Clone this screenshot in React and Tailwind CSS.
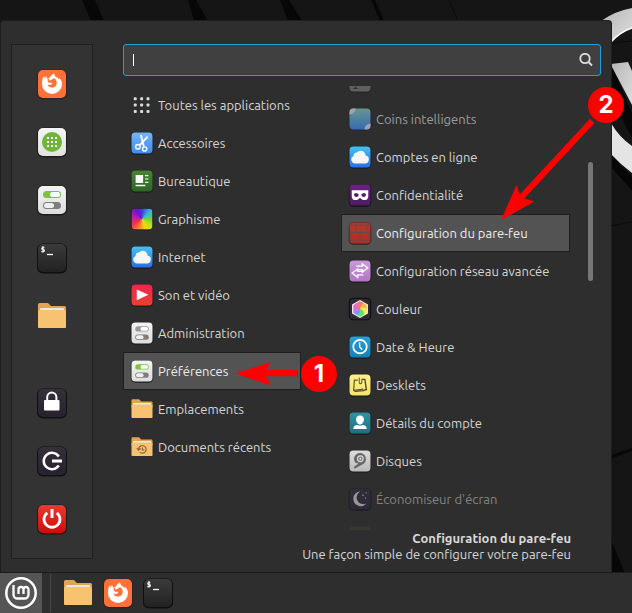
import React from "react";

const SANS = "font-['Ubuntu','Noto_Sans','Open_Sans',sans-serif]";

function Svg({ size = "size-8", children }) {
  return (
    <svg viewBox="0 0 32 32" className={`${size} shrink-0`} aria-hidden="true" fill="none">
      {children}
    </svg>
  );
}

function Tile({ size, id, from, to, edge = "#1d1d1d", children }) {
  return (
    <Svg size={size}>
      <defs>
        <linearGradient id={id} x1="0" y1="0" x2="0" y2="1">
          <stop offset="0" stopColor={from} />
          <stop offset="1" stopColor={to} />
        </linearGradient>
      </defs>
      <rect x="1" y="1.5" width="30" height="30" rx="6" fill={edge} />
      <rect x="2" y="2" width="28" height="28" rx="5" fill={`url(#${id})`} />
      {children}
    </Svg>
  );
}

function Firefox({ id }) {
  return (
    <Tile id={id} from="#ff7139" to="#ff7139" edge="#2a2422">
      <path
        fill="#fff"
        d="M6.600 10.500l1.300-2.600.8 2 1.400-2 .9 2.500h2.300c.6-2.200 2.200-3.200 4.700-5.200.3 1.800 1.100 3 2.300 4.400l.7-.6c.5 1 .9 1.500 1.400 1.900l.9-.9c1.800 1.800 2.700 3.800 2.700 6a10 10 0 0 1-20 0c0-1.900.2-3.700.6-5.500z"
      />
      <path
        fill="#ff7139"
        d="M12 13.800l-.6-2.300c1-.9 2-1.200 3-.9h4.200c1.300.9 2.100 2.500 2.100 4.500a4.700 4.600 0 0 1-9.200 1.200c1.400 1 3.600.9 4.600-.6.300-.6-.3-1.200-1.400-1-1.300.2-2 .1-2.700-.9z"
      />
      <path d="M13.300 12.800l2.900-1.400 1.200-1.800-2.200-.5-2.500 1.400z" fill="#fff" />
    </Tile>
  );
}

function Switches({ id, size, top = "#7cc43f" }) {
  return (
    <Tile id={id} size={size} from="#f4f4f4" to="#dcdcdc">
      <rect x="7" y="7" width="18" height="7" rx="3.500" fill={top} />
      <rect x="14" y="8" width="10" height="5" rx="2.500" fill="#fff" />
      <rect x="7" y="18" width="18" height="7" rx="3.500" fill="#7e7e7e" />
      <rect x="8" y="19" width="10" height="5" rx="2.500" fill="#efefef" />
    </Tile>
  );
}

function Terminal({ id }) {
  return (
    <Tile id={id} from="#3b3b3b" to="#222" edge="#0f0f0f">
      <path
        d="M8.300 5.600H6.800a1 1 0 0 0 0 2h.6a1 1 0 0 1 0 2H5.300M7 4v6.600"
        stroke="#f2f2f2"
        strokeWidth="1.200"
      />
      <path d="M11 12.500h6" stroke="#fff" strokeWidth="1.300" />
    </Tile>
  );
}

function Folder({ size, recent }) {
  return (
    <Svg size={size}>
      <path d="M2 4.500a1.500 1.500 0 0 1 1.500-1.500h8.500l3 3h13.500a1.500 1.500 0 0 1 1.500 1.500V14H2z" fill="#dfa54f" />
      <rect x="4" y="8" width="24" height="4" rx="1" fill="#e9e9ea" />
      <path d="M2 11.500a1.500 1.500 0 0 1 1.500-1.500h25a1.500 1.500 0 0 1 1.500 1.500V27a1 1 0 0 1-1 1H3a1 1 0 0 1-1-1z" fill="#f8c370" />
      {recent && (
        <path
          d="M11.500 19.500a5 5 0 1 1 1.500 3.300M9.200 17.500l2.300 2.700 2.700-2.200M16.500 16.500v3.200h2.500"
          stroke="#8a6838"
          strokeWidth="1.600"
        />
      )}
    </Svg>
  );
}

const S = "size-6";

function Cloud({ id }) {
  return (
    <Tile id={id} size={S} from="#41c4f2" to="#2a6ee8">
      <path fill="#f6f6f6" d="M9.500 24.500a5.200 5.200 0 0 1-2-10 4 4 0 0 1 4.500-4.500 6.500 6.500 0 0 1 11.400 4A5.300 5.300 0 0 1 22.800 24.500z" />
    </Tile>
  );
}

const icons = {
  all: (
    <Svg size={S}>
      {[7, 15.500, 24].map((y) =>
        [7, 15.500, 24].map((x) => (
          <rect key={`${x}-${y}`} x={x - 2} y={y - 1.500} width="4" height="4" rx="1.200" fill="#dcdcdc" />
        ))
      )}
    </Svg>
  ),
  accessories: (
    <Tile id="acc" size={S} from="#76b5fb" to="#3d8bea">
      <g stroke="#fff" strokeWidth="1.900">
        <circle cx="10.500" cy="21" r="3" />
        <circle cx="19.500" cy="24" r="2.800" />
        <path d="M13 18.700L23.500 7.500M18.500 21L14.500 5.500" strokeWidth="2.500" />
      </g>
    </Tile>
  ),
  office: (
    <Tile id="off" size={S} from="#46862f" to="#2f6426">
      <path fill="#fff" d="M7.500 8h10v10.500h-10zM20 8h4.500v1.500H20zM20 12.500h4.500V14H20zM20 17h4.500v1.500H20zM7.500 21h13v2h-13z" />
    </Tile>
  ),
  graphics: (
    <svg viewBox="0 0 32 32" className="size-6 shrink-0" aria-hidden="true">
      <foreignObject x="1" y="1" width="30" height="30">
        <div className="size-[30px] rounded-[6px] border border-[#222] bg-[conic-gradient(from_0deg,#3a3ce0,#36b3d8_45deg,#72d23a_90deg,#b9e01b_125deg,#ffd60a_160deg,#f9822d_200deg,#f0304a_240deg,#c020a0_280deg,#6a10d8_330deg,#3a3ce0)]" />
      </foreignObject>
    </svg>
  ),
  video: (
    <Tile id="vid" size={S} from="#f0264f" to="#e8402e">
      <path fill="#fff" d="M9 8.500v14.500L24.500 15.800z" />
    </Tile>
  ),
  admin: <Switches id="adm" size={S} top="#9a9a9a" />,
  prefs: <Switches id="prf" size={S} />,
  places: <Folder size={S} />,
  recent: <Folder size={S} recent />,
  previous: (
    <Tile id="prv" size={S} from="#bdbdbd" to="#bdbdbd">
      <path d="M7 26h6M12 23.500L8 26" stroke="#444" strokeWidth="1.500" />
    </Tile>
  ),
  corners: (
    <Tile id="cor" size={S} from="#86d0c8" to="#3c8cf8" edge="#2b1d3c">
      <path d="M2 10V7a5 5 0 0 1 5-5h3a8 8 0 0 1-8 8zM30 22v3a5 5 0 0 1-5 5h-3a8 8 0 0 1 8-8z" fill="#e4e1e5" />
    </Tile>
  ),
  privacy: (
    <Tile id="pri" size={S} from="#6c2383" to="#4b1c62" edge="#16101a">
      <path fill="#fff" d="M5 9.500h22v8c0 3-1.500 5-4 5h-3c-2 0-2.500-2.500-4-2.500s-2 2.500-4 2.500H9c-2.500 0-4-2-4-5z" />
      <path fill="#562070" d="M8 14.500q3.500-2.500 6.500 1-.5 3-3.500 3t-3-4zM24 14.500q-3.500-2.500-6.500 1 .5 3 3.500 3t3-4z" />
    </Tile>
  ),
  firewall: (
    <Tile id="fw" size={S} from="#c0342a" to="#b02d24" edge="#2d2321">
      <path
        d="M2 5.300h28M2 15.300h28M2 25.300h28M10.700 5.300v10M25.300 5.300v10M16 15.300v10M4 15.300v10M28 15.300v10M9.500 25.300V30M22.700 25.300V30"
        stroke="#59504a"
        strokeWidth="1.300"
      />
    </Tile>
  ),
  network: (
    <Tile id="net" size={S} from="#cb9ada" to="#b275c5">
      <path
        d="M11 9.500h8V6.300L26.500 12 19 17.500v-3.200h-5M20.500 21.300h-7.500v3.200L5.500 18.700 13 13.200v3.200h6"
        stroke="#fff"
        strokeWidth="1.700"
      />
    </Tile>
  ),
  colour: (
    <svg viewBox="0 0 32 32" className="size-6 shrink-0" aria-hidden="true">
      <rect x="1" y="1" width="30" height="30" rx="6" fill="#111014" />
      <rect x="2.500" y="2.500" width="27" height="27" rx="5" fill="#302a35" />
      <path d="M16 4l10.500 6v12L16 28 5.500 22V10z" fill="#fff" />
      <path d="M16 16C12 13 12 8 16 5.500l5 2.500z" fill="#ff7661" />
      <path d="M16 16c0-4 2-7 5-8l4 3v5.500z" fill="#ffb34d" />
      <path d="M16 16c3-3 7-2.500 9 .5V21l-4 3z" fill="#e9ee54" />
      <path d="M16 16c4 1 6 4.500 5 8l-5 2.500-5-2.500z" fill="#62df71" />
      <path d="M16 16c1 4-1 7-5 8l-4-3v-4.500z" fill="#7c96fa" />
      <path d="M16 16c-3 3-7 3-9 .5V11l4-3 5-2.500z" fill="#e969d0" />
      <path d="M16 16C12 13 11.500 8.500 16 5.500z" fill="#ff7661" />
    </svg>
  ),
  clock: (
    <Tile id="clk" size={S} from="#2aa0d5" to="#1580b8">
      <circle cx="16" cy="15.500" r="9" stroke="#fff" strokeWidth="2.300" />
      <path d="M15.500 9.500v6.200l3.500 4" stroke="#fff" strokeWidth="1.800" />
    </Tile>
  ),
  desklets: (
    <Tile id="dsk" size={S} from="#fff08a" to="#f7e26a">
      <path d="M13 9.500H8.500L7.500 23l13-1.500" stroke="#5d582f" strokeWidth="1.600" />
      <path d="M19 8.500h3.500L24.500 22l-4 1.500-12 1" stroke="#4a4628" strokeWidth="1.800" />
      <path d="M15 6v6.500a1.700 1.700 0 0 0 3.400 0V7.500" stroke="#6d673c" strokeWidth="1.500" />
    </Tile>
  ),
  account: (
    <Tile id="usr" size={S} from="#2f93a3" to="#1f7080">
      <path fill="#fff" d="M16 6c3.600 0 5.300 2.500 5.300 5.300S19.300 18 16 18s-5.300-3.800-5.300-6.700S12.400 6 16 6zM7 24c0-3.500 2.500-5.500 5.500-5.500 2 1.300 5 1.300 7 0 3 0 5.500 2 5.500 5.500z" />
    </Tile>
  ),
  disks: (
    <Tile id="dks" size={S} from="#dcdcdc" to="#b9b9b9">
      <path d="M9.500 18a8 8 0 1 1 11.500 1.500L10 25.500c-2 .8-3-.8-1.500-2.300l5.500-4z" fill="#666" />
      <circle cx="16.500" cy="13" r="3.800" stroke="#dedede" strokeWidth="1.500" fill="#777" />
      <circle cx="16.500" cy="13" r="1.200" fill="#eee" />
    </Tile>
  ),
  saver: (
    <Tile id="sav" size={S} from="#352c48" to="#2e2642" edge="#0a090c">
      <path fill="#fff" d="M16.500 6a9.800 9.800 0 1 0 8 16A8.800 8.800 0 0 1 16.500 6z" />
      <path fill="#ddd" d="M19 10h2v2h-2zM23.500 7h1.500v1.500h-1.500zM22.500 14h1.500v1.500h-1.500z" />
    </Tile>
  ),
  next: <Tile id="nxt" size={S} from="#9cae5b" to="#9cae5b" />,
};

const favourites = [
  ["Firefox", <Firefox id="ff1" />],
  [
    "Logithèque",
    <Tile id="soft" from="#f4f4f4" to="#e2e2e2">
      <circle cx="16" cy="16" r="10" fill="#6fb53a" />
      {[12, 16, 20].map((y) =>
        [12, 16, 20].map((x) => <rect key={`${x}-${y}`} x={x - 1} y={y - 1} width="2" height="2" fill="#fff" />)
      )}
    </Tile>,
  ],
  ["Paramètres système", <Switches id="sys" />],
  ["Terminal", <Terminal id="t1" />],
  ["Fichiers", <Folder />],
];

const session = [
  [
    "Verrouiller l'écran",
    <Tile id="lock" from="#352f3c" to="#28222e" edge="#111014">
      <path d="M11.200 14.500v-4.300a4.600 4.600 0 0 1 9.200 0v4.300" stroke="#fff" strokeWidth="2" />
      <rect x="8" y="13" width="15.500" height="10.500" rx="1" fill="#fff" />
    </Tile>,
  ],
  [
    "Fermer la session",
    <Tile id="out" from="#352f3c" to="#28222e" edge="#111014">
      <path d="M22.800 11.500a8.200 8.200 0 1 0 0 9" stroke="#fff" strokeWidth="2.500" />
      <path d="M16 16h10" stroke="#fff" strokeWidth="3" />
    </Tile>,
  ],
  [
    "Éteindre",
    <Tile id="off2" from="#e83a30" to="#d00b0b">
      <path d="M11.300 9.800a8 8 0 1 0 9.400 0" stroke="#fff" strokeWidth="2.800" />
      <path d="M16 6v9" stroke="#fff" strokeWidth="3" />
    </Tile>,
  ],
];

const categories = [
  ["all", "Toutes les applications"],
  ["accessories", "Accessoires"],
  ["office", "Bureautique"],
  ["graphics", "Graphisme"],
  ["internet", "Internet"],
  ["video", "Son et vidéo"],
  ["admin", "Administration"],
  ["prefs", "Préférences"],
  ["places", "Emplacements"],
  ["recent", "Documents récents"],
];

const applications = [
  ["previous", "", "opacity-35"],
  ["corners", "Coins intelligents", "opacity-65"],
  ["online", "Comptes en ligne"],
  ["privacy", "Confidentialité"],
  ["firewall", "Configuration du pare-feu"],
  ["network", "Configuration réseau avancée"],
  ["colour", "Couleur"],
  ["clock", "Date & Heure"],
  ["desklets", "Desklets"],
  ["account", "Détails du compte"],
  ["disks", "Disques"],
  ["saver", "Économiseur d'écran", "opacity-50"],
  ["next", "", "opacity-10"],
];

function iconFor(name) {
  if (name === "internet") return <Cloud id="cl1" />;
  if (name === "online") return <Cloud id="cl2" />;
  return icons[name];
}

function MenuRow({ icon, label, selected, fade = "" }) {
  return (
    <li>
      <button
        type="button"
        aria-label={label || icon}
        className={`flex h-[38px] w-full items-center gap-1 border px-1.5 text-left whitespace-nowrap ${
          selected ? "border-[#1f1f1f] bg-[#535353] text-[#eeeeee]" : "border-transparent"
        } ${fade}`}
      >
        {iconFor(icon)}
        <span>{label}</span>
      </button>
    </li>
  );
}

function Wallpaper() {
  return (
    <svg
      viewBox="0 0 632 613"
      preserveAspectRatio="xMaxYMin slice"
      className="absolute inset-0 size-full"
      aria-hidden="true"
    >
      <defs>
        <linearGradient id="silver" x1="0" y1="0" x2="1" y2="1">
          <stop offset="0" stopColor="#b5b5b5" />
          <stop offset="1" stopColor="#dedede" />
        </linearGradient>
      </defs>
      <rect width="632" height="613" fill="#151515" />
      <g fill="#070707">
        <path d="M82 0h13l9 21H91zM188 0h8l12 21h-14zM280 0h9l13 21h-14zM371 0h4l9 21h-4z" />
        <path d="M611 63l21 50v25l-21-40zM611 155l21 22v14l-21-24zM611 540l14 33h-14zM611 455l21-7v3l-21 8z" />
      </g>
      <path d="M449 0l9 21M611 43l21-2M611 226l21-4" stroke="#0b0b0b" />
      <path d="M601 21q14-10 31-13v20q-12 4-21 14z" fill="url(#silver)" />
      <path d="M611 42q9-10 21-14" stroke="#fff" strokeWidth="1.500" fill="none" />
      <path d="M611 64l17-2 4 9v34l-20-38z" fill="url(#silver)" />
      <path d="M611 123q8 14 21 23v27q-11-8-21-19z" fill="#e4e4e4" />
    </svg>
  );
}

function MintLogo() {
  return (
    <Svg>
      <circle cx="16" cy="16" r="14.700" stroke="#fff" strokeWidth="2.500" />
      <path
        d="M8.500 8v9.500a4 4 0 0 0 4 4h7a4 4 0 0 0 4-4v-5a2.500 2.500 0 0 0-5 0V17M18.500 12.500a2.500 2.500 0 0 0-5 0V17"
        stroke="#fff"
        strokeWidth="2.300"
      />
    </Svg>
  );
}

function Annotations() {
  const badge =
    "absolute flex size-9 items-center justify-center rounded-full bg-[#fe0000] font-['Inter',Arial,sans-serif] text-2xl leading-none font-bold text-white";
  return (
    <div className="pointer-events-none absolute inset-0">
      <svg viewBox="0 0 632 613" className="absolute top-0 left-0 h-[613px] w-[632px]" aria-hidden="true">
        <path d="M298 370v6h-32l5 9.500L235 373.500l36-11.500-5 8z" fill="#fe0000" />
        <path d="M590 119l4 4L524 198.500l10.500 3L501 220l15.500-35 3.500 10z" fill="#fe0000" />
        <path d="M592 121L521 197.500M298 373.200h-34" stroke="#fe0000" strokeWidth="6" />
      </svg>
      <span className={`${badge} top-[356px] left-[301px]`}>1</span>
      <span className={`${badge} top-[87px] left-[588px]`}>2</span>
    </div>
  );
}

function IconButton({ label, children }) {
  return (
    <button type="button" aria-label={label} className="size-8">
      {children}
    </button>
  );
}

export default function App() {
  return (
    <div className={`relative flex min-h-screen flex-col overflow-hidden bg-[#151515] text-[13px] leading-4 text-[#d6d6d6] ${SANS}`}>
      <Wallpaper />

      <main className="relative mt-5 mr-5 flex flex-1 gap-[30px] rounded-t-[4px] border border-b-0 border-[#1e1e1e] bg-[#2e2e2e] pt-[23px] pr-2.5 pb-2.5 pl-2.5">
        <aside className="mb-[3px] flex w-[82px] shrink-0 flex-col items-center justify-between self-stretch border border-[#1f1f1f] bg-[#333333] py-[23px]">
          <div className="flex flex-col gap-[26px]">
            {favourites.map(([label, icon]) => (
              <IconButton key={label} label={label}>{icon}</IconButton>
            ))}
          </div>
          <div className="flex flex-col gap-[26px]">
            {session.map(([label, icon]) => (
              <IconButton key={label} label={label}>{icon}</IconButton>
            ))}
          </div>
        </aside>

        <section className="flex min-w-0 flex-1 flex-col">
          <label className="flex h-8 items-center rounded-[3px] border border-[#1f9ede] bg-[#404040] pr-[7px] pl-[9px]">
            <span className="h-3 w-px bg-white" />
            <input type="text" aria-label="Rechercher" className="min-w-0 flex-1 bg-transparent outline-none" />
            <svg viewBox="0 0 14 14" className="size-3.5 shrink-0" fill="none" stroke="#dedede" strokeWidth="1.800" aria-hidden="true">
              <circle cx="6" cy="5.500" r="4.700" />
              <path d="M9.500 9l3.500 3.500" />
            </svg>
          </label>

          <div className="mt-2.5 flex h-[444px] gap-10">
            <nav className="w-[178px] shrink-0" aria-label="Catégories">
              <ul>
                {categories.map(([icon, label]) => (
                  <MenuRow key={icon} icon={icon} label={label} selected={icon === "prefs"} />
                ))}
              </ul>
            </nav>
            <div className="flex min-w-0 flex-1 gap-[18px] overflow-hidden pr-2">
              <ul className="-mt-6 min-w-0 flex-1">
                {applications.map(([icon, label, fade]) => (
                  <MenuRow key={icon} icon={icon} label={label} fade={fade} selected={icon === "firewall"} />
                ))}
              </ul>
              <div className="w-[5px] shrink-0 pt-[76px]">
                <div className="h-[119px] rounded-full bg-[#777777]" />
              </div>
            </div>
          </div>

          <footer className="pr-[30px] text-right text-[#d8d8d8]">
            <h1 className="font-bold">Configuration du pare-feu</h1>
            <p>Une façon simple de configurer votre pare-feu</p>
          </footer>
        </section>
      </main>

      <div className="relative flex h-[41px] items-center border-t border-[#1b1b1b] bg-[#2e2e2e]">
        <button type="button" aria-label="Menu" className="flex h-full w-[42px] shrink-0 items-center justify-center bg-[#555555]">
          <MintLogo />
        </button>
        <span className="ml-2 h-[38px] w-px bg-[#484848]" />
        <div className="ml-[11px] flex gap-2">
          <IconButton label="Fichiers"><Folder /></IconButton>
          <IconButton label="Firefox"><Firefox id="ff2" /></IconButton>
          <IconButton label="Terminal"><Terminal id="t2" /></IconButton>
        </div>
      </div>

      <Annotations />
    </div>
  );
}
